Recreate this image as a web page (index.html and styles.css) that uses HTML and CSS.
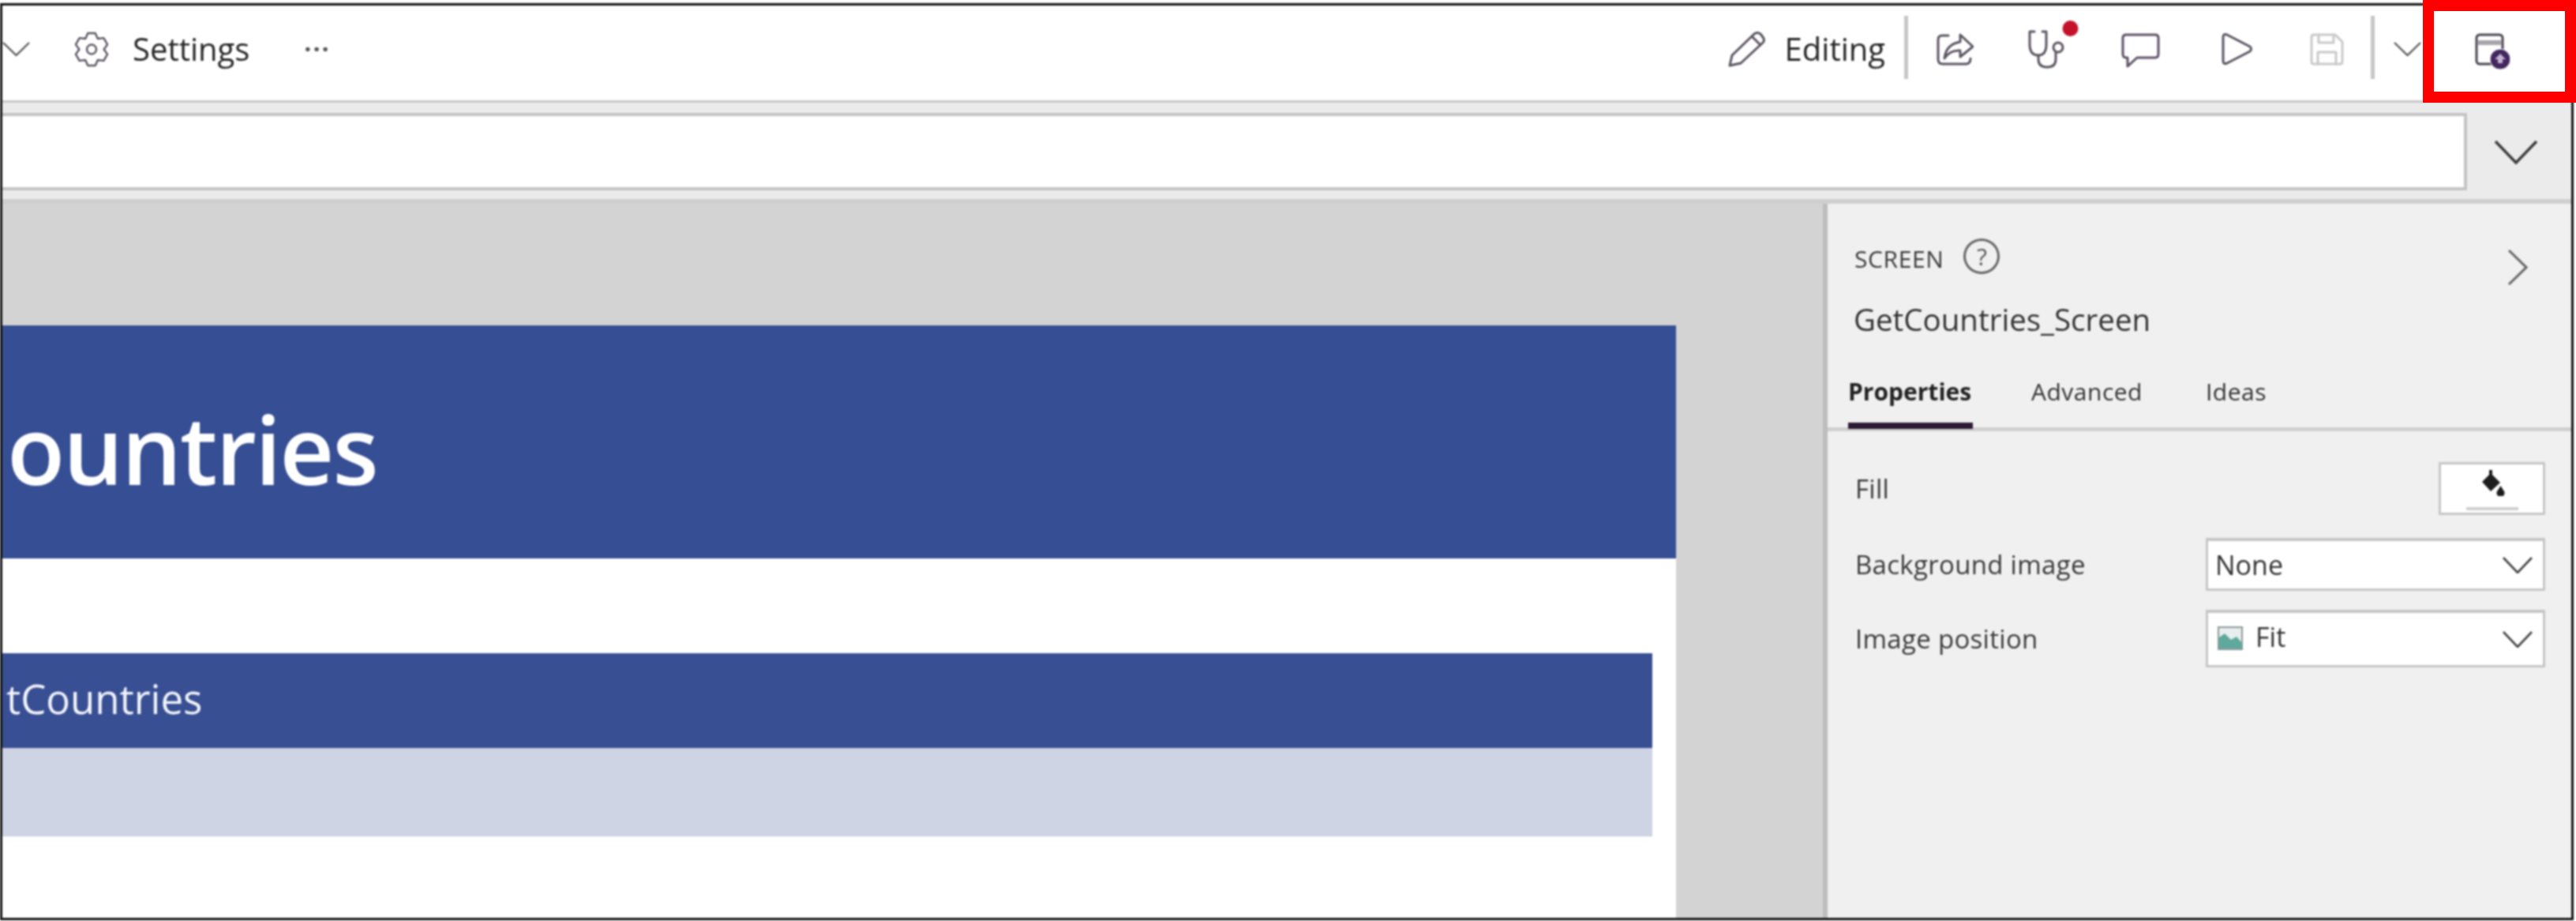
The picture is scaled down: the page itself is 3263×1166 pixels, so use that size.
FILE: index.html
```html
<!DOCTYPE html>
<html lang="en">
<head>
<meta charset="utf-8">
<title>GetCountries_Screen</title>
<link rel="stylesheet" href="styles.css">
</head>
<body>
<div class="frame">
  <header class="toolbar">
    <div class="tool-group">
      <svg class="chev-small" viewBox="0 0 35 18"><path d="M1 1 L17.5 17 L34 1"/></svg>
      <svg class="ico gear" width="48" height="49" viewBox="0 0 24 24"><path d="M9.64 1.77 L14.36 1.77 L15.9 5.25 L19.68 4.84 L22.04 8.93 L19.8 12 L22.04 15.07 L19.68 19.16 L15.9 18.75 L14.36 22.23 L9.64 22.23 L8.1 18.75 L4.32 19.16 L1.96 15.07 L4.2 12 L1.96 8.93 L4.32 4.84 L8.1 5.25 Z" stroke-width="1.2"/><circle cx="12" cy="12" r="3" stroke-width="1.2"/></svg>
      <span class="tool-text settings">Settings</span>
      <span class="dots">···</span>
    </div>
    <div class="tool-group tool-right">
      <svg class="ico" width="49" height="46" viewBox="0 0 49 46"><path d="M3 44 L6 31 L34 4 Q38 1 42 4 L45 8 Q48 12 45 15 L17 41 Z M31 7 L42 18"/></svg>
      <span class="tool-text editing">Editing</span>
      <span class="sep sep-a"></span>
      <svg class="ico share" width="47" height="41" viewBox="0 0 47 41"><path d="M15 3 H7 Q2 3 2 8 V33 Q2 39 8 39 H37 Q43 39 43 32"/><path d="M30 2 L46 17 L30 30 V22 Q17 21 10 32 Q12 14 30 11 Z"/></svg>
      <svg class="ico steth" width="48" height="48" viewBox="0 0 48 48"><path d="M9 2 H3 V18 Q3 32 14 32 Q24 32 24 18 V2 H19"/><path d="M14 32 V37 Q14 47 25 47 Q36 47 36 37 V28"/><circle cx="39" cy="22" r="6"/><circle class="alert" cx="54.5" cy="-2" r="10"/></svg>
      <svg class="ico comment" width="49" height="44" viewBox="0 0 49 44"><path d="M6 2 H43 Q47 2 47 6 V26 Q47 31 43 31 H20 L8 42 V31 H6 Q2 31 2 26 V6 Q2 2 6 2 Z"/></svg>
      <svg class="ico play" width="41" height="42" viewBox="0 0 41 42"><path d="M3 6 Q3 1 8 3 L37 18 Q40 21 37 24 L8 39 Q3 41 3 36 Z"/></svg>
      <svg class="ico save" width="43" height="41" viewBox="0 0 43 41"><path d="M2 5 Q2 2 5 2 H32 L41 11 V36 Q41 39 38 39 H5 Q2 39 2 36 Z"/><path d="M11 2 V12 H30 V2 M10 39 V24 H33 V39"/></svg>
      <span class="sep sep-b"></span>
      <svg class="chev-small chev-menu" viewBox="0 0 35 18"><path d="M1 1 L17.5 17 L34 1"/></svg>
      <svg class="ico addon" width="46" height="46" viewBox="0 0 46 46"><rect x="2" y="2" width="33" height="37" rx="4"/><path class="addon-band" d="M3 9 H34 V15 H3 Z"/><circle class="addon-dot" cx="32" cy="33" r="13"/><path class="addon-plus" d="M32 26 L39 33 L35 33 L35 38 L29 38 L29 33 L25 33 Z"/></svg>
    </div>
  </header>

  <div class="formula">
    <div class="formula-input"></div>
    <svg class="chev-formula" viewBox="0 0 56 32"><path d="M2 2 L28 29 L54 2"/></svg>
  </div>

  <main class="workspace">
    <section class="canvas">
      <div class="page">
        <div class="banner">ountries</div>
        <div class="list-head">tCountries</div>
        <div class="list-row"></div>
      </div>
    </section>

    <aside class="panel">
      <div class="panel-top">
        <span class="screen-tag">SCREEN</span>
        <span class="help">?</span>
        <svg class="panel-close" viewBox="0 0 26 47"><path d="M2 2 L24 23.5 L2 45"/></svg>
      </div>
      <div class="panel-title">GetCountries_Screen</div>
      <nav class="tabs">
        <span class="tab tab-active">Properties</span>
        <span class="tab tab-adv">Advanced</span>
        <span class="tab">Ideas</span>
      </nav>
      <div class="props">
        <div class="prop prop-fill">
          <span class="prop-label">Fill</span>
          <div class="fill-btn">
            <svg class="bucket" width="34" height="33" viewBox="0 0 34 33"><path d="M13 0 H17 V6 L27 16 L15 27 L4 15 L13 6 Z"/><path d="M27.5 20 L32 27 A5 5 0 1 1 23 27 Z"/></svg>
            <span class="fill-swatch"></span>
          </div>
        </div>
        <div class="prop">
          <span class="prop-label">Background image</span>
          <div class="select">
            <span>None</span>
            <svg class="select-chev" viewBox="0 0 38 21"><path d="M1 1 L19 20 L37 1"/></svg>
          </div>
        </div>
        <div class="prop prop-tall">
          <span class="prop-label">Image position</span>
          <div class="select">
            <svg class="pic" width="32" height="30" viewBox="0 0 32 30"><rect x="1" y="1" width="30" height="28" fill="#e8eeee" stroke="#8a9a98" stroke-width="2"/><path d="M2 28 V14 L9 9 L17 17 L24 13 L30 20 V28 Z" fill="#5fa89e"/></svg>
            <span class="fit-text">Fit</span>
            <svg class="select-chev" viewBox="0 0 38 21"><path d="M1 1 L19 20 L37 1"/></svg>
          </div>
        </div>
      </div>
    </aside>
  </main>
</div>
<div class="callout"></div>
</body>
</html>
```

FILE: styles.css
```css
* { box-sizing: border-box; }

html, body {
  margin: 0;
  width: 3263px;
  height: 1166px;
  overflow: hidden;
  background: #fff;
}

body {
  position: relative;
  font-family: "Open Sans", "Noto Sans", sans-serif;
  color: #3a3a3a;
  padding-top: 4px;
}

svg { display: block; flex: none; }

.frame {
  width: 3260px;
  height: 1161px;
  border: 3px solid #111;
  display: flex;
  flex-direction: column;
  overflow: hidden;
  filter: blur(0.8px);
}

/* top toolbar */
.toolbar {
  height: 123px;
  flex: none;
  background: #fff;
  border-bottom: 3px solid #c8c8c8;
  padding-bottom: 10px;
  display: flex;
  align-items: center;
  justify-content: space-between;
}

.tool-group { display: flex; align-items: center; }
.tool-right { padding-right: 76px; }

.chev-small { width: 35px; height: 18px; fill: none; stroke: #5b5b5b; stroke-width: 2.4; }
.chev-menu { margin-left: 24px; }

.ico { fill: none; stroke: #5c5563; stroke-width: 3; stroke-linejoin: round; stroke-linecap: round; }
.gear { margin-left: 54px; }
.share { margin-left: 36px; }
.steth { margin-left: 68px; overflow: visible; }
.alert { fill: #c4122a; stroke: none; }
.comment { margin-left: 71px; margin-top: 4px; stroke: #5f5068; }
.play { margin-left: 77px; }
.save { margin-left: 72px; stroke: #c9c9c9; }
.addon { margin-left: 68px; margin-top: 6px; stroke: #4a4650; }
.addon-band { fill: #a8a4ac; stroke: none; }
.addon-dot { fill: #43285e; stroke: #fff; stroke-width: 1; }
.addon-plus { fill: #c4b4d4; stroke: none; }

.tool-text { font-size: 40px; line-height: 50px; color: #262626; white-space: nowrap; }
.settings { margin-left: 28px; }
.editing { margin-left: 24px; }
.dots { margin-left: 69px; width: 28px; font-size: 32px; line-height: 32px; font-weight: 700; color: #555; letter-spacing: 2px; text-align: center; white-space: nowrap; }

.sep { width: 5px; height: 80px; background: #c6c6c6; margin-top: -4px; }
.sep-a { margin-left: 24px; }
.sep-b { margin-left: 34px; }

/* formula bar */
.formula {
  flex: none;
  height: 128px;
  background: #ebebeb;
  padding: 13px 0 11px;
  border-bottom: 6px solid #cfcfcf;
  display: flex;
  align-items: flex-start;
}

.formula-input {
  width: 3122px;
  height: 98px;
  background: #fff;
  border: 4px solid #c4c4c4;
  border-left: 0;
}

.chev-formula {
  width: 56px;
  height: 32px;
  margin: 34px 0 0 34px;
  fill: none;
  stroke: #3c3c3c;
  stroke-width: 3.5;
}

/* workspace */
.workspace { flex: 1; min-height: 0; display: flex; }

.canvas {
  width: 2306px;
  flex: none;
  background: #d3d3d3;
  padding-top: 154px;
}

.page { width: 2120px; height: 100%; background: #fff; }

.banner {
  height: 295px;
  padding: 16px 0 0 6px;
  background: #364e93;
  display: flex;
  align-items: center;
  color: #fff;
  font-size: 120px;
  font-weight: 600;
  letter-spacing: -2.2px;
}

.list-head {
  width: 2090px;
  height: 120px;
  margin-top: 120px;
  padding: 0 0 6px 5px;
  background: #384f93;
  display: flex;
  align-items: center;
  color: #f2f4fa;
  font-size: 51px;
}

.list-row { width: 2090px; height: 112px; background: #cfd4e4; }

/* right panel */
.panel {
  flex: 1;
  background: #f0f0f0;
  border-left: 6px solid #bdbdbd;
}

.panel-top {
  display: flex;
  align-items: flex-start;
  height: 60px;
  margin-top: 44px;
  padding-left: 34px;
}

.screen-tag { margin-top: 11px; font-size: 30px; line-height: 30px; color: #3a3a3a; letter-spacing: 0.6px; }

.help {
  width: 46px;
  height: 45px;
  margin-left: 25px;
  border: 3px solid #666;
  border-radius: 50%;
  text-align: center;
  font-size: 30px;
  line-height: 39px;
  color: #555;
}

.panel-close {
  width: 26px;
  height: 47px;
  margin: 13px 55px 0 auto;
  fill: none;
  stroke: #666;
  stroke-width: 3;
}

.panel-title {
  margin-top: 18px;
  padding-left: 33px;
  font-size: 38.5px;
  line-height: 48px;
  height: 50px;
  color: #333;
}

.tabs {
  display: flex;
  height: 76px;
  margin-top: 40px;
  padding-left: 26px;
  border-bottom: 5px solid #cfcfcf;
}

.tab {
  height: 73px;
  font-size: 30px;
  line-height: 52px;
  color: #333;
  letter-spacing: 0.5px;
  margin-left: 80px;
}

.tab-active {
  width: 158px;
  margin-left: 0;
  font-weight: 700;
  color: #222;
  border-bottom: 8px solid #2c1a33;
  white-space: nowrap;
  letter-spacing: 0;
}

.tab-adv { margin-left: 74px; }

.props {
  display: flex;
  flex-direction: column;
  gap: 24px;
  width: 909px;
  margin-top: 39px;
  padding-left: 35px;
}

.prop {
  height: 67px;
  display: flex;
  align-items: center;
  justify-content: space-between;
}

.prop-fill { margin-bottom: 5px; }
.prop-tall { height: 73px; }

.prop-label { font-size: 33px; color: #3a3a3a; letter-spacing: 0.3px; }

.fill-btn {
  width: 135px;
  height: 67px;
  background: #fff;
  border: 3px solid #c6c6c6;
  display: flex;
  flex-direction: column;
  align-items: center;
  padding-top: 7px;
}

.bucket { fill: #1d1d1d; }
.fill-swatch { width: 66px; height: 4px; margin-top: 14px; background: #cfcfcf; }

.select {
  width: 430px;
  height: 100%;
  background: #fff;
  border: 3px solid #c6c6c6;
  border-top-width: 4px;
  padding: 0 13px 0 9px;
  display: flex;
  align-items: center;
  font-size: 34px;
  color: #333;
}

.pic { margin: 0 0 3px 3px; }
.fit-text { margin: 0 0 6px 16px; }
.select-chev { width: 38px; height: 21px; margin-left: auto; fill: none; stroke: #444; stroke-width: 2.6; }

/* annotation drawn over the screenshot */
.callout {
  position: absolute;
  left: 3069px;
  top: 0;
  width: 194px;
  height: 130px;
  border: 14px solid #f00;
}
```
